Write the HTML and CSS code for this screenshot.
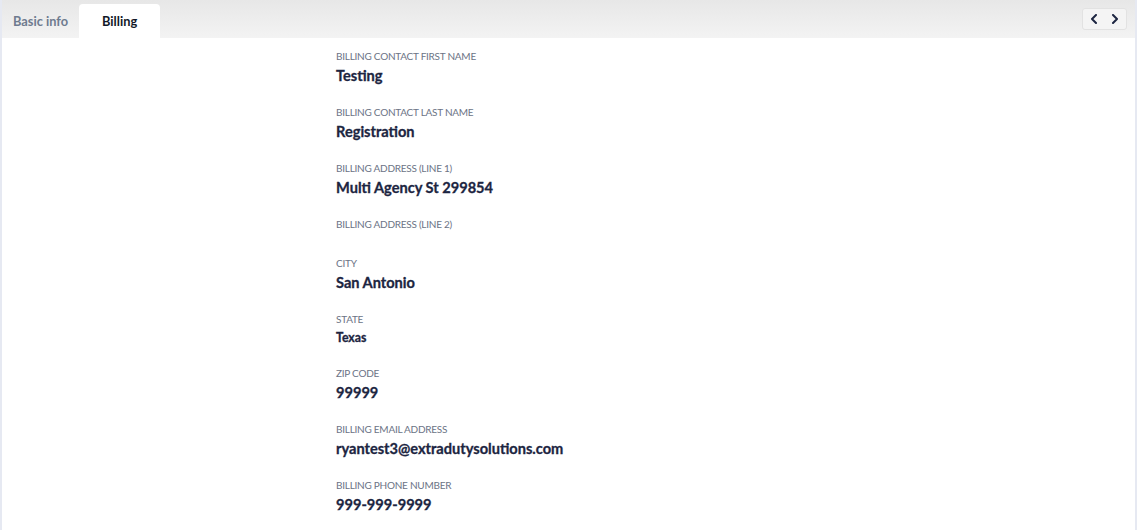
FILE: index.html
```html
<!DOCTYPE html>
<html>
<head>
<meta charset="utf-8">
<link rel="stylesheet" href="styles.css">
</head>
<body>
<div class="page">
  <div class="tabbar">
    <div class="tabs">
      <div class="tab">Basic info</div>
      <div class="tab active">Billing</div>
    </div>
    <div class="nav">
      <span class="nav-btn"><svg width="8" height="10" viewBox="0 0 8 10"><path d="M6 1 L2 5 L6 9" fill="none" stroke="#1c2541" stroke-width="2" stroke-linecap="round" stroke-linejoin="round"/></svg></span>
      <span class="nav-btn"><svg width="8" height="10" viewBox="0 0 8 10"><path d="M2 1 L6 5 L2 9" fill="none" stroke="#1c2541" stroke-width="2" stroke-linecap="round" stroke-linejoin="round"/></svg></span>
    </div>
  </div>
  <div class="content">
    <div class="fields">
      <div class="field"><div class="label">Billing Contact First Name</div><div class="value">Testing</div></div>
      <div class="field"><div class="label">Billing Contact Last Name</div><div class="value">Registration</div></div>
      <div class="field"><div class="label">Billing Address (Line 1)</div><div class="value">Multi Agency St 299854</div></div>
      <div class="field"><div class="label">Billing Address (Line 2)</div><div class="value empty"></div></div>
      <div class="field"><div class="label">City</div><div class="value">San Antonio</div></div>
      <div class="field"><div class="label">State</div><div class="value small">Texas</div></div>
      <div class="field"><div class="label">Zip Code</div><div class="value">99999</div></div>
      <div class="field"><div class="label">Billing Email Address</div><div class="value">ryantest3@extradutysolutions.com</div></div>
      <div class="field"><div class="label">Billing Phone Number</div><div class="value">999-999-9999</div></div>
    </div>
  </div>
</div>
</body>
</html>
```
FILE: styles.css
```css
* { box-sizing: border-box; }
html, body { margin: 0; padding: 0; background: #fff; }
body { font-family: Lato, "Open Sans", sans-serif; }
.page {
  width: 1137px;
  height: 530px;
  border-left: 2px solid #e6e9f2;
  border-right: 2px solid #e6e9f2;
  overflow: hidden;
}
.tabbar {
  height: 38px;
  background: linear-gradient(#e7e7e7, #f3f3f3);
  display: flex;
  justify-content: space-between;
  align-items: flex-end;
  padding-right: 8px;
}
.tabs { display: flex; align-items: flex-end; }
.tab {
  height: 34px;
  line-height: 34px;
  font-size: 12.8px;
  font-weight: 700;
  color: #6e7b8f;
  padding: 0 11px;
}
.tab.active {
  background: #fff;
  color: #111827;
  border-radius: 4px 4px 0 0;
  width: 81px;
  text-align: center;
  padding: 0;
}
.nav {
  align-self: flex-start;
  margin-top: 8px;
  height: 22px;
  width: 45px;
  display: flex;
  align-items: center;
  justify-content: space-around;
  border: 1px solid #e2e2e2;
  border-radius: 3px;
  background: #f4f4f4;
}
.nav-btn { display: flex; align-items: center; }
.content { padding: 11px 0 0 334px; }
.field { margin-bottom: 19px; }
.label {
  font-size: 10px;
  line-height: 14px;
  text-transform: uppercase;
  color: #6b7385;
  margin-bottom: 3px;
  letter-spacing: -0.25px;
}
.value {
  font-size: 14.6px;
  line-height: 20px;
  font-weight: 700;
  color: #1c2541;
  -webkit-text-stroke: 0.3px #1c2541;
}
.value.small { font-size: 12.3px; line-height: 18px; }
.value.empty { height: 3px; }
```
